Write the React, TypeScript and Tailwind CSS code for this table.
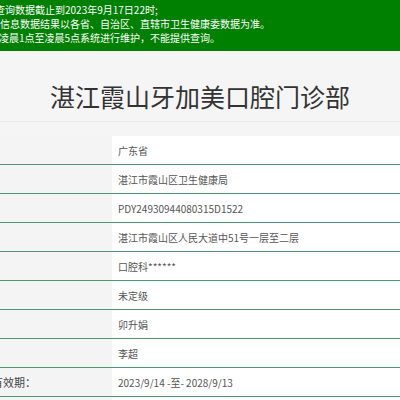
const NOTICE = [
  { text: '查询数据截止到2023年9月17日22时;', cls: 'ml-[-5px]' },
  { text: '信息数据结果以各省、自治区、直辖市卫生健康委数据为准。', cls: 'ml-0' },
  { text: '凌晨1点至凌晨5点系统进行维护，不能提供查询。', cls: 'ml-[-1px]' },
]

const ROWS = [
  { label: '', value: '广东省' },
  { label: '', value: '湛江市霞山区卫生健康局' },
  { label: '', value: 'PDY24930944080315D1522' },
  { label: '', value: '湛江市霞山区人民大道中51号一层至二层' },
  { label: '', value: '口腔科******' },
  { label: '', value: '未定级' },
  { label: '', value: '卯升娟' },
  { label: '', value: '李超' },
  { label: '有效期：', value: '2023/9/14 -至- 2028/9/13' },
  { label: '', value: '' },
]

export default function App() {
  return (
    <div
      className="h-[400px] w-[400px] overflow-hidden bg-[#f5f5f5]"
      style={{ fontFamily: '"Noto Sans CJK SC", "Noto Sans", sans-serif' }}
    >
      {/* Notice banner */}
      <div className="bg-[#008000] pt-[3px] pb-[6px] text-[10px] leading-[14px] text-white">
        {NOTICE.map((line) => (
          <div key={line.text} className={`whitespace-nowrap ${line.cls}`}>
            {line.text}
          </div>
        ))}
      </div>

      {/* Title */}
      <div className="border-b border-[#ebebeb] pt-[28px] pb-[8px] text-center">
        <h1 className="text-[25px] leading-[34px] text-[#333]">湛江霞山牙加美口腔门诊部</h1>
      </div>

      {/* Info table */}
      <div className="mt-[14px]">
        {ROWS.map((row, i) => (
          <div key={i} className="flex h-[29px] border-b border-[#4b9870]">
            <div className="flex w-[112px] shrink-0 items-center overflow-hidden bg-[#f4f4f4]">
              {row.label && (
                <span className="ml-[-8px] whitespace-nowrap text-[11px] text-[#444]">{row.label}</span>
              )}
            </div>
            <div className="flex flex-1 items-center bg-white pl-[6px] text-[10px] text-[#555]">
              {row.value}
            </div>
          </div>
        ))}
      </div>
    </div>
  )
}
